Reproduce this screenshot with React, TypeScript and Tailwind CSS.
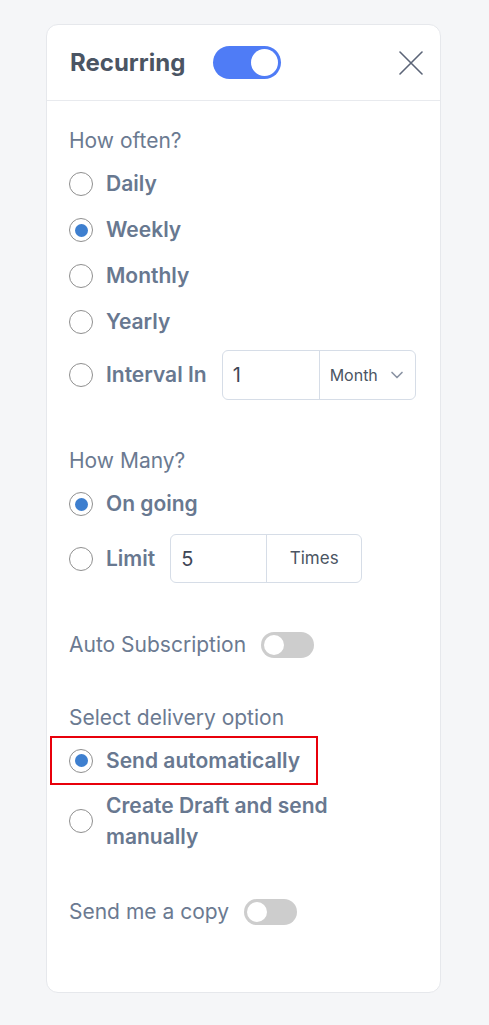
import { ChevronDown } from 'lucide-react'

function Radio({ checked = false }: { checked?: boolean }) {
  return (
    <span className="w-[24px] h-[24px] rounded-full border-[1.5px] border-[#8f8f8f] bg-white flex items-center justify-center shrink-0">
      {checked && <span className="w-[13px] h-[13px] rounded-full bg-[#3e7fcf]" />}
    </span>
  )
}

function Toggle({ on = false, big = false }: { on?: boolean; big?: boolean }) {
  if (big) {
    return (
      <span className="w-[68px] h-[33px] rounded-full bg-[#4f7cf6] flex items-center justify-end px-[3px]">
        <span className="w-[27px] h-[27px] rounded-full bg-white" />
      </span>
    )
  }
  return (
    <span
      className={
        on
          ? 'w-[53px] h-[26px] rounded-full bg-[#4f7cf6] flex items-center justify-end px-[3px]'
          : 'w-[53px] h-[26px] rounded-full bg-[#cdcdcd] flex items-center px-[3px]'
      }
    >
      <span className="w-[20px] h-[20px] rounded-full bg-white" />
    </span>
  )
}

function Option({ label, checked = false }: { label: string; checked?: boolean }) {
  return (
    <label className="h-[46px] flex items-center gap-[13px]">
      <Radio checked={checked} />
      <span className="text-[21px] font-semibold text-[#687890]">{label}</span>
    </label>
  )
}

export default function App() {
  return (
    <div className="min-h-[1025px] bg-[#f5f6f8] pt-[24px] font-['Inter',sans-serif]">
      <div className="ml-[46px] w-[395px] h-[969px] bg-white border border-[#e6e8ec] rounded-[12px] flex flex-col">
        {/* Header */}
        <div className="h-[76px] shrink-0 border-b border-[#e8eaee] flex items-center pl-[23px] pr-[17px]">
          <h2 className="text-[24px] font-bold text-[#4b5563] mr-[28px]">Recurring</h2>
          <Toggle big on />
          <button className="ml-auto text-[#5b6477]" aria-label="Close">
            <svg width="24" height="24" viewBox="0 0 24 24" fill="none" stroke="currentColor" strokeWidth="1.6" strokeLinecap="round">
              <path d="M1 1L23 23M23 1L1 23" />
            </svg>
          </button>
        </div>

        {/* Body */}
        <div className="pl-[22px] pr-[24px] pt-[26px] flex flex-col">
          <p className="h-[28px] leading-[28px] text-[21px] text-[#6b7a91]">How often?</p>
          <div className="mt-[6px] flex flex-col">
            <Option label="Daily" />
            <Option label="Weekly" checked />
            <Option label="Monthly" />
            <Option label="Yearly" />
            <div className="mt-[5px] h-[50px] flex items-center">
              <label className="flex items-center gap-[13px]">
                <Radio />
                <span className="text-[21px] font-semibold text-[#687890]">Interval In</span>
              </label>
              <div className="ml-[15px] w-[194px] h-[50px] border border-[#d6dde7] rounded-[6px] flex">
                <span className="w-[97px] border-r border-[#d6dde7] flex items-center pl-[10px] text-[20px] text-[#3f4756]">1</span>
                <span className="flex-1 flex items-center pl-[10px] pr-[8px] text-[16px] text-[#4b5563]">
                  Month
                  <ChevronDown size={20} strokeWidth={2} className="ml-auto text-[#8a93a3]" />
                </span>
              </div>
            </div>
          </div>

          <p className="mt-[47px] h-[28px] leading-[28px] text-[21px] text-[#6b7a91]">How Many?</p>
          <div className="mt-[6px] flex flex-col">
            <Option label="On going" checked />
            <div className="mt-[7px] h-[49px] flex items-center">
              <label className="flex items-center gap-[13px]">
                <Radio />
                <span className="text-[21px] font-semibold text-[#687890]">Limit</span>
              </label>
              <div className="ml-[15px] w-[192px] h-[49px] border border-[#d6dde7] rounded-[6px] flex">
                <span className="w-[96px] border-r border-[#d6dde7] flex items-center pl-[10px] text-[20px] text-[#3f4756]">5</span>
                <span className="flex-1 flex items-center justify-center text-[17px] text-[#4b5563]">Times</span>
              </div>
            </div>
          </div>

          <div className="mt-[48px] h-[28px] flex items-center gap-[15px]">
            <span className="text-[21px] text-[#6b7a91]">Auto Subscription</span>
            <Toggle />
          </div>

          <p className="mt-[45px] h-[28px] leading-[28px] text-[21px] text-[#6b7a91]">Select delivery option</p>
          <div className="mt-[4px] relative">
            <span className="absolute -left-[19px] top-0 w-[268px] h-[49px] border-2 border-[#e8000b] pointer-events-none" />
            <label className="h-[49px] flex items-center gap-[13px]">
              <Radio checked />
              <span className="text-[21px] font-semibold text-[#687890]">Send automatically</span>
            </label>
          </div>
          <label className="mt-[5px] flex items-center gap-[13px]">
            <Radio />
            <span className="w-[240px] text-[21px] leading-[31px] font-semibold text-[#687890]">
              Create Draft and send manually
            </span>
          </label>

          <div className="mt-[47px] h-[26px] flex items-center gap-[15px]">
            <span className="text-[21px] text-[#6b7a91]">Send me a copy</span>
            <Toggle />
          </div>
        </div>
      </div>
    </div>
  )
}
